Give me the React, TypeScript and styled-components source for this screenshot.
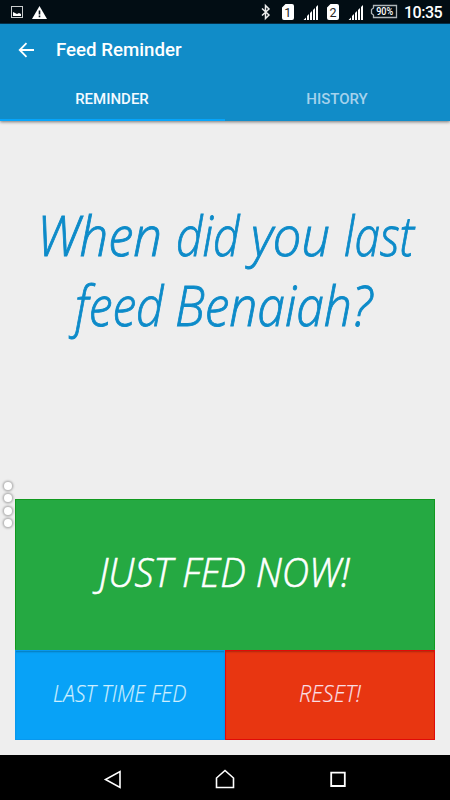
import React, { useLayoutEffect, useRef, useState } from "react";
import styled, { createGlobalStyle } from "styled-components";

const GlobalStyle = createGlobalStyle`
  * { box-sizing: border-box; }
  html, body { margin: 0; background: #eee; }
  button { border: 0; padding: 0; margin: 0; font: inherit; color: inherit; background: none; }
`;

const Screen = styled.div`
  width: 450px;
  height: 800px;
  display: flex;
  flex-direction: column;
  overflow: hidden;
  background: #eeeeee;
  font-family: Roboto, "Liberation Sans", sans-serif;
`;

const StatusBar = styled.div`
  height: 24px;
  flex: none;
  display: flex;
  justify-content: space-between;
  background: #020d14;
  border-bottom: 1px solid #06344f;
  color: #fff;
`;

const StatusGroup = styled.div`
  display: flex;
  height: 24px;
`;

const Clock = styled.div`
  width: 46px;
  font-size: 16px;
  font-weight: 500;
  line-height: 25px;
  letter-spacing: -0.5px;
  white-space: nowrap;
`;

const Header = styled.header`
  position: relative;
  height: 97px;
  flex: none;
  background: #118cc8;
  box-shadow: 0 1px 3px rgba(0, 0, 0, 0.5);
  color: #fff;
`;

const TitleBar = styled.div`
  height: 52px;
  display: flex;
  align-items: center;
`;

const BackButton = styled.button`
  width: 56px;
  height: 52px;
  padding-left: 18px;
  display: flex;
  align-items: center;
`;

const Title = styled.h1`
  margin: 0;
  padding-top: 1px;
  font-size: 18.7px;
  font-weight: 500;
  line-height: 25px;
`;

const Tabs = styled.nav`
  height: 45px;
  display: grid;
  grid-template-columns: 1fr 1fr;
`;

const Tab = styled.button<{ $active?: boolean }>`
  height: 45px;
  font-size: 15px;
  font-weight: 500;
  line-height: 40px;
  padding: 3px 1px 0 0;
  color: ${(p) => (p.$active ? "#f4faff" : "#a5d2ec")};
  border-bottom: 2px solid ${(p) => (p.$active ? "#06a5fb" : "transparent")};
`;

const Content = styled.main`
  flex: 1;
  display: flex;
  flex-direction: column;
  padding: 79px 15px 15px;
`;

const Question = styled.div`
  height: 299px;
  color: #0d8bc9;
  font-size: 54.5px;
  -webkit-text-stroke: 0.9px #0d8bc9;
`;

const Line = styled.div<{ $indent: number }>`
  display: flex;
  height: 70px;
  line-height: 70px;
  padding-left: ${(p) => p.$indent}px;
`;

const WordBox = styled.span<{ $width: number; $gap?: number }>`
  display: block;
  flex: none;
  width: ${(p) => p.$width}px;
  margin-right: ${(p) => p.$gap ?? 0}px;
  white-space: nowrap;
  font-family: "Open Sans", "Noto Sans", sans-serif;
  font-style: italic;
  font-weight: 300;
`;

const WordText = styled.span`
  display: inline-block;
  transform-origin: 0 50%;
`;

function Word({ width, gap, children }: { width: number; gap?: number; children: string }) {
  const ref = useRef<HTMLSpanElement>(null);
  const [scale, setScale] = useState(1);
  useLayoutEffect(() => {
    if (ref.current) setScale(width / ref.current.offsetWidth);
  }, [width]);
  return (
    <WordBox $width={width} $gap={gap}>
      <WordText ref={ref} style={{ transform: `scaleX(${scale})` }}>{children}</WordText>
    </WordBox>
  );
}

const Actions = styled.div`
  display: grid;
  grid-template-columns: 210px 210px;
  grid-template-rows: 151px 90px;
  position: relative;
`;

const Action = styled.button<{ $bg: string; $edge: string; $size: number; $wide?: boolean; $ink: string }>`
  grid-column: ${(p) => (p.$wide ? "1 / 3" : "auto")};
  display: flex;
  align-items: center;
  justify-content: center;
  padding-right: 1px;
  padding-bottom: ${(p) => (p.$wide ? 7 : 3)}px;
  background: ${(p) => p.$bg};
  border: 1px solid ${(p) => p.$edge};
  border-bottom-color: ${(p) => (p.$wide ? p.$bg : p.$edge)};
  box-shadow: ${(p) => (p.$wide ? "none" : "inset 0 2px 2px -1px rgba(0,0,0,.25)")};
  color: ${(p) => p.$ink};
  font-size: ${(p) => p.$size}px;
  line-height: 1;
  -webkit-text-stroke: ${(p) => (p.$wide ? 0.6 : 0.2)}px ${(p) => p.$ink};
`;

const Dots = styled.div`
  position: absolute;
  left: -11px;
  top: -17.5px;
  display: grid;
  gap: 4.5px;
`;

const Dot = styled.i`
  width: 8px;
  height: 8px;
  border-radius: 50%;
  background: #fff;
  box-shadow: 0 0 2px 1.5px #b4b4b4;
`;

const NavBar = styled.footer`
  height: 45px;
  flex: none;
  display: flex;
  justify-content: center;
  background: #000;
`;

const NavButton = styled.button`
  width: 112.5px;
  height: 45px;
  padding-top: 2px;
  display: flex;
  align-items: center;
  justify-content: center;
`;

const Signal = ({ x }: { x: number }) => (
  <path d={`M${x - 2.5} 20l2.5-2.5V20zM${x + 1} 20v-4l2-2v6zM${x + 4} 20v-7l2-2v9zM${x + 7} 20V10l2-2v12zM${x + 10} 20V7l2-2v15z`} />
);

export default function App() {
  return (
    <>
      <GlobalStyle />
      <Screen>
        <StatusBar>
          <StatusGroup>
            <svg width="60" height="24">
              <rect x="11.5" y="6.5" width="11" height="11" fill="none" stroke="#c9cccd" />
              <path d="M13 16v-4l2 1 2 1 2-1 2 1v2z" fill="#fff" />
              <path d="M39.5 6 47 19H32z" fill="#fff" />
              <path d="M39.5 10.5v4M39.5 15.5v1.7" stroke="#071118" strokeWidth="1.6" />
            </svg>
          </StatusGroup>
          <StatusGroup>
            <svg width="146" height="24" fill="#fff">
              <path d="M4 8.5l7 6.5-3.5 3.5v-13L11 9l-7 6.5" fill="none" stroke="#eee" strokeWidth="1.5" />
              <path d="M27.5 4H34q2 0 2 2v12q0 2-2 2h-8q-2 0-2-2V7.5zM72.5 4H79q2 0 2 2v12q0 2-2 2h-8q-2 0-2-2V7.5z" />
              <text x="29.7" y="16.5" fontSize="12.5" fill="#222" textAnchor="middle">1</text>
              <text x="75" y="16.5" fontSize="12.5" fill="#222" textAnchor="middle">2</text>
              <Signal x={48} />
              <Signal x={93} />
              <path d="M115.5 5.5h23v12h-23v-2.5l-2-1.5v-4l2-1.5z" fill="none" stroke="#aeb5b8" strokeWidth="1.3" />
              <text x="126.7" y="15.3" fontSize="10" fontWeight="500" textAnchor="middle" textLength="17" lengthAdjust="spacingAndGlyphs">90%</text>
            </svg>
            <Clock>10:35</Clock>
          </StatusGroup>
        </StatusBar>
        <Header>
          <TitleBar>
            <BackButton aria-label="Back">
              <svg width="17" height="16" fill="none" stroke="#fff" strokeWidth="1.8">
                <path d="M16 8H2M8.5 1.2 1.7 8l6.8 6.8" />
              </svg>
            </BackButton>
            <Title>Feed Reminder</Title>
          </TitleBar>
          <Tabs>
            <Tab $active>REMINDER</Tab>
            <Tab>HISTORY</Tab>
          </Tabs>
        </Header>
        <Content>
          <Question>
            <Line $indent={22}>
              <Word width={125} gap={14}>When</Word>
              <Word width={64} gap={11}>did</Word>
              <Word width={79} gap={14}>you</Word>
              <Word width={70}>last</Word>
            </Line>
            <Line $indent={60}>
              <Word width={89} gap={11}>feed</Word>
              <Word width={197}>Benaiah?</Word>
            </Line>
          </Question>
          <Actions>
            <Action $wide $bg="#25a942" $edge="#10991f" $size={41} $ink="#fff">
              <Word width={251}>JUST FED NOW!</Word>
            </Action>
            <Action $bg="#08a2f7" $edge="#0898ee" $size={23.5} $ink="#cdeeff">
              <Word width={133}>LAST TIME FED</Word>
            </Action>
            <Action $bg="#e83611" $edge="#e10a08" $size={23.5} $ink="#fadfe4">
              <Word width={62}>RESET!</Word>
            </Action>
            <Dots><Dot /><Dot /><Dot /><Dot /></Dots>
          </Actions>
        </Content>
        <NavBar>
          <NavButton aria-label="Back">
            <svg width="20" height="20" fill="none" stroke="#fff" strokeWidth="1.6"><path d="M17 2.5v16L2.5 10.5z" /></svg>
          </NavButton>
          <NavButton aria-label="Home">
            <svg width="20" height="20" fill="none" stroke="#fff" strokeWidth="1.6"><path d="M1.5 18.5V9L10 1.5 18.5 9v9.5z" /></svg>
          </NavButton>
          <NavButton aria-label="Recent apps">
            <svg width="20" height="20" fill="none" stroke="#fff" strokeWidth="1.8"><path d="M3.2 3.7h13.6V17H3.2z" /></svg>
          </NavButton>
        </NavBar>
      </Screen>
    </>
  );
}
